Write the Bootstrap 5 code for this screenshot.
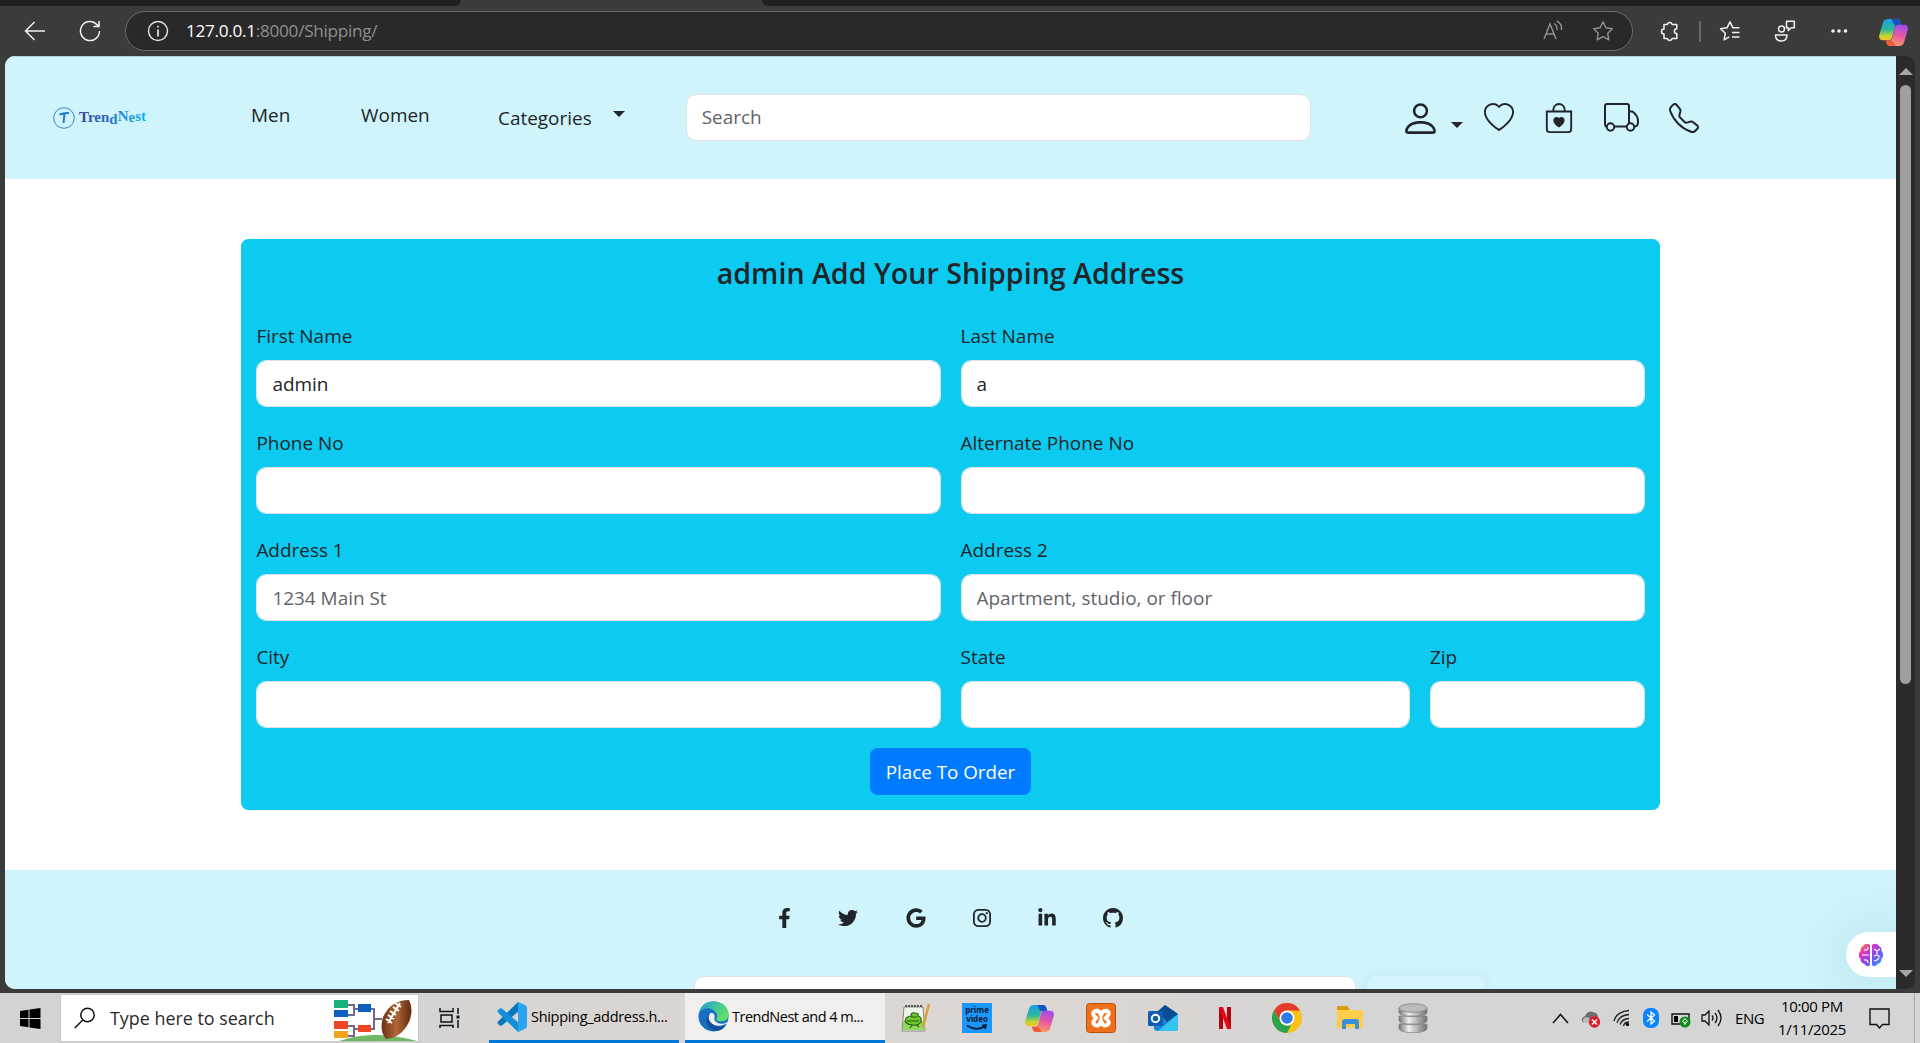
<!DOCTYPE html>
<html lang="en">
<head>
<meta charset="utf-8">
<meta name="viewport" content="width=device-width, initial-scale=1">
<title>TrendNest</title>
<link href="https://cdn.jsdelivr.net/npm/bootstrap@5.3.0/dist/css/bootstrap.min.css" rel="stylesheet">
<style>
html{font-size:20px}
body{font-family:"Open Sans","Noto Sans",sans-serif;font-size:18.95px;line-height:30px;height:1043px;overflow:hidden;background:#3b3b3b;color:#212529}
svg{display:block;flex:none}
.tabstrip{height:6px}
.tab-l{width:461px;background:#202020;border-bottom-right-radius:8px}
.tab-gap{width:301px}
.tab-r{background:#202020;border-bottom-left-radius:8px}
.toolbar{height:50px;color:#f2f2f2;padding-left:24px}
.urlbar{width:1508px;height:40px;border:1px solid #6b6b6b;border-radius:20px;background:#292929;margin-left:24px;padding-left:21px;font-size:17.2px;color:#8f8f8f}
.urlbar b{font-weight:400;color:#fff}
.urltext{margin-left:17px;letter-spacing:-.3px}
.viewport{height:933px;padding-left:5px;padding-right:5px}
.pagebox{width:1891px;border-radius:10px 0 0 10px;background:#fff;overflow:hidden}
.sky{background:#cff4fc}
.topnav{height:123px;border-top:1px solid #b5d2d8}
.form-control{border-radius:10px;font-size:18.95px;line-height:30px;height:47px}
.form-control::placeholder{color:#5f6469}
.searchbox{width:625px;margin-left:61px;margin-top:-2px}
.ship{margin-top:60px;padding:15px;background:#0dcaf0;border-radius:7.5px;height:571px}
.ship h4{font-size:28.6px;font-weight:600;line-height:36px;padding-top:1px;margin-bottom:29px}
.ship .form-label{padding-top:1px;margin-bottom:9px;display:block}
.order-btn{background:#007bff;border-color:#007bff;color:#fff;font-size:18.8px;line-height:30px;font-weight:500;height:47px;width:161px;padding:0;border-radius:7.5px;white-space:nowrap}
.foot{margin-top:60px;height:119px;position:relative}
.social{padding-top:38px;padding-left:773px;height:106px}
.mailrow{padding-left:689px;gap:11px}
.mail{width:662px;height:20px;background:#fff;border:1px solid #dee2e6;border-radius:10px 10px 0 0}
.sub{width:118px;height:20px;background:#d4f5fd;border-radius:9px 9px 0 0;box-shadow:0 0 12px rgba(0,80,110,.08)}
.caret{width:0;height:0;border:6px solid transparent;border-top-color:#212529;border-bottom:0}
.sbar{width:19px;background:#2b2b2b;border-radius:0 9px 9px 0;padding:12px 0}
.thumb{width:11px;height:599px;border-radius:6px;background:#9f9f9f;margin-top:10px}
.brain{position:absolute;right:0;top:62px;width:50px;height:45px;border-radius:23px 0 0 23px;background:#fff;box-shadow:0 2px 40px 18px rgba(0,70,90,.06)}
.taskbar{margin-top:4px;height:50px;color:#000;background:linear-gradient(90deg,#d3d3d3 0,#d5d4d3 400px,#dad5d2 600px,#dcd7d4 1000px,#d7d5d4 1250px,#d4d5d6 1400px,#d5d5d5 100%)}
.tsearch{width:359px;height:48px;background:#fff;margin-left:19px;padding-left:13px;border:1px solid #c8c8c8;font-size:17.9px;color:#2a2a2a}
.app{height:50px;border-bottom:3px solid #0078d7;font-size:14.5px;letter-spacing:-.3px;white-space:nowrap}
.app-code{width:190px;margin-left:28px;padding-left:7px}
.app-edge{width:200px;margin-left:6px;padding-left:13px;background:#f0efed;letter-spacing:-.5px}
.clock{font-size:15px;line-height:23px;width:80px;letter-spacing:-.35px;margin-left:7px}
.lang{font-size:15px;letter-spacing:-.4px;width:30px;margin-left:12px}
.brand{font-family:"Liberation Serif",serif;font-weight:700;font-size:14.2px}
.appname{font-size:8px;font-weight:700;fill:#06182c}
</style>
</head>
<body class="d-flex flex-column">
<svg width="0" height="0" class="position-absolute"><defs>
<linearGradient id="cpA" x1="0" y1="0" x2="0" y2="1"><stop offset="0" stop-color="#189fe8"/><stop offset=".5" stop-color="#2fb79a"/><stop offset=".8" stop-color="#c8d630"/><stop offset="1" stop-color="#f3c321"/></linearGradient>
<linearGradient id="cpB" x1=".6" y1="0" x2=".3" y2="1"><stop offset="0" stop-color="#a54bea"/><stop offset=".5" stop-color="#ea5aa0"/><stop offset="1" stop-color="#fca55e"/></linearGradient>
<symbol id="copilot" viewBox="0 0 28 28">
<path d="M9 1h8c3 0 3.500 2 4.300 5h-3c-1.600 0-2.400 1-3 3l-2.700 9.500c-.5 2-1.700 3-3.600 3H3.500C.5 21.500-.4 19 .4 16L3.600 5C4.500 2 6 1 9 1z" fill="url(#cpA)"/>
<path d="M12 1h5c3 0 3.500 2 4.500 6h-4c-2.500 0-3.500-1-4-3z" fill="#1b4fc4"/>
<path d="M19 27h-8c-3 0-3.500-2-4.300-5h3c1.600 0 2.400-1 3-3l2.700-9.500c.5-2 1.700-3 3.600-3h5.500c3 0 3.900 2.500 3.100 5.500l-3.200 11C23.500 26 22 27 19 27z" fill="url(#cpB)"/>
<path d="M16 27h-5c-3 0-3.500-2-4.300-5h4c2.500 0 3.800 1.500 5.300 5z" fill="#ee5b36"/></symbol>
<linearGradient id="brandG"><stop offset="0" stop-color="#3a3f9a"/><stop offset=".55" stop-color="#2b7fc9"/><stop offset="1" stop-color="#16b4ef"/></linearGradient>
<linearGradient id="brn" x1="0" y1="0" x2="1" y2="1"><stop offset="0" stop-color="#ff9a1f"/><stop offset=".3" stop-color="#e12fc0"/><stop offset=".6" stop-color="#7b4df2"/><stop offset="1" stop-color="#1fa6ff"/></linearGradient>
<linearGradient id="edg" x1="0" y1="0" x2="1" y2=".5"><stop offset="0" stop-color="#1a9fe0"/><stop offset="1" stop-color="#5fe06a"/></linearGradient>
<linearGradient id="ball"><stop offset="0" stop-color="#6b3317"/><stop offset=".5" stop-color="#b06536"/><stop offset="1" stop-color="#5e2b12"/></linearGradient>
<linearGradient id="cyl"><stop offset="0" stop-color="#777"/><stop offset=".35" stop-color="#eee"/><stop offset="1" stop-color="#6f6f6f"/></linearGradient>
</defs></svg>

<div class="tabstrip d-flex"><div class="tab-l"></div><div class="tab-gap"></div><div class="tab-r flex-grow-1"></div></div>

<div class="toolbar d-flex align-items-center">
  <svg width="22" height="22" fill="none" stroke="#f2f2f2" stroke-width="1.500"><path d="M21 11H2M10.500 2 1.500 11l9 9"/></svg>
  <svg width="22" height="22" style="margin-left:33px" fill="none" stroke="#f2f2f2" stroke-width="1.500"><path d="M20.500 11A9.500 9.500 0 1 1 17.800 4.400L20 6.500M20 1v5.500h-5.500"/></svg>
  <div class="urlbar d-flex align-items-center">
    <svg width="22" height="22" fill="none" stroke="#e6e6e6" stroke-width="1.400"><circle cx="11" cy="11" r="9.500"/><path d="M11 9.500v7M11 5.800v1.800" stroke-width="1.700"/></svg>
    <span class="urltext"><b>127.0.0.1</b>:8000/Shipping/</span>
    <svg class="ms-auto" width="22" height="22" fill="none" stroke="#929292" stroke-width="1.400"><path d="m2 19 6-15 6 15M4 14h8M12 3.500q3.500 2 3 6.500M15 .8q5.500 3.500 4.500 9.200"/></svg>
    <svg width="22" height="22" style="margin-right:18px;margin-left:28px" fill="none" stroke="#929292" stroke-width="1.400" stroke-linejoin="round"><path d="m11 1.800 2.900 6 6.500.9-4.700 4.600 1.100 6.500L11 16.700l-5.800 3.100 1.100-6.500L1.600 8.700l6.500-.9z"/></svg>
  </div>
  <div class="d-flex align-items-center flex-grow-1" style="padding-left:26px">
    <svg width="22" height="22" fill="none" stroke="#f2f2f2" stroke-width="1.500" stroke-linejoin="round"><path d="M5 4.500h3.200a2.600 2.600 0 0 1 5 0h4.600v4.300a2.300 2.300 0 0 0 0 4.800v4.900h-4.600a2.600 2.600 0 0 1-5 0H5v-4.400a2.500 2.500 0 0 1 0-5z"/></svg>
    <div style="width:2px;height:21px;background:#686868;margin-left:18px"></div>
    <svg width="22" height="22" style="margin-left:18px" fill="none" stroke="#f2f2f2" stroke-width="1.500" stroke-linejoin="round"><path d="M20.500 7.800h-6.500L11 1.800 8 7.800l-6.500.9 4.800 4.600-1.200 6.500 5.200-2.900M13 12.500h7.500M13 17h7.500"/></svg>
    <svg width="22" height="22" style="margin-left:33px" fill="none" stroke="#f2f2f2" stroke-width="1.500" stroke-linejoin="round"><circle cx="7.500" cy="9" r="3"/><path d="M1.500 15h11.500q0 6-5.700 6t-5.800-6zM12.500 1.200h7.800v6.500h-3l-3 2.700V7.700h-1.800z"/></svg>
    <svg width="18" height="6" style="margin-left:34px" fill="#f2f2f2"><circle cx="3" cy="3" r="1.800"/><circle cx="9" cy="3" r="1.800"/><circle cx="15.500" cy="3" r="1.800"/></svg>
    <svg width="29" height="29" style="margin-left:31px;margin-top:3px"><use href="#copilot"/></svg>
  </div>
</div>

<div class="viewport d-flex">
  <main class="pagebox">
    <nav class="topnav sky d-flex align-items-center">
      <svg width="100" height="28" style="margin-left:46px;margin-top:-1px"><circle cx="13" cy="14" r="10.300" fill="none" stroke="#3b86c9" stroke-width="1"/><path d="M8.500 10.500q5-2 9.500-1.500M13.500 10l-1 9" stroke="#2479c4" stroke-width="2" fill="none"/><text y="18" class="brand" fill="url(#brandG)" x="28" dy="0 0 0 0 1.500 -2.500 .5 -.3 -.7" textLength="67" lengthAdjust="spacingAndGlyphs">TrendNest</text></svg>
      <span style="width:110px;margin-left:100px;margin-top:-7px">Men</span>
      <span style="width:137px;margin-top:-7px">Women</span>
      <span>Categories</span>
      <span class="caret" style="margin-left:21px;margin-top:-9px"></span>
      <input class="form-control searchbox" placeholder="Search" aria-label="Search">
      <div class="d-flex align-items-center" style="margin-left:89px;color:#212529">
        <svg width="41" height="41" viewBox="0 0 16 16" fill="currentColor"><path d="M8 8a3 3 0 1 0 0-6 3 3 0 0 0 0 6m2-3a2 2 0 1 1-4 0 2 2 0 0 1 4 0m4 8c0 1-1 1-1 1H3s-1 0-1-1 1-4 6-4 6 3 6 4m-1-.004c-.001-.246-.154-.986-.832-1.664C11.516 10.680 10.289 10 8 10s-3.516.680-4.168 1.332c-.678.678-.830 1.418-.832 1.664z"/></svg>
        <span class="caret" style="margin:14px 0 0 10px"></span>
        <svg style="margin-left:21px" width="30" height="30" viewBox="0 0 16 16" fill="currentColor"><path d="m8 2.748-.717-.737C5.600.281 2.514.878 1.400 3.053c-.523 1.023-.641 2.500.314 4.385.920 1.815 2.834 3.989 6.286 6.357 3.452-2.368 5.365-4.542 6.286-6.357.955-1.886.838-3.362.314-4.385C13.486.878 10.400.280 8.717 2.010zM8 15C-7.333 4.868 3.279-3.040 7.824 1.143q.090.083.176.171a3 3 0 0 1 .176-.170C12.720-3.042 23.333 4.867 8 15"/></svg>
        <svg style="margin-left:30px" width="30" height="30" viewBox="0 0 16 16" fill="currentColor"><path d="M10.500 3.500a2.500 2.500 0 0 0-5 0V4h5zm1 0V4H15v10a2 2 0 0 1-2 2H3a2 2 0 0 1-2-2V4h3.500v-.5a3.500 3.500 0 1 1 7 0M14 14V5H2v9a1 1 0 0 0 1 1h10a1 1 0 0 0 1-1M8 7.993c1.664-1.711 5.825 1.283 0 5.132-5.825-3.850-1.664-6.843 0-5.132"/></svg>
        <svg style="margin-left:30px;margin-top:-2px" width="36" height="30" fill="none" stroke="currentColor" stroke-width="2"><path d="M3 24.500H2q-1-.5-1-3V4q0-2 2-2h20q2 0 2 2v20.500H10M25 9.500h3.500q6 4.500 5.500 10.500 0 4-3 4.500"/><circle cx="6.500" cy="25" r="3.700"/><circle cx="26.500" cy="25" r="3.700" fill="#cff4fc"/></svg>
        <svg style="margin-left:29px" width="30" height="30" viewBox="0 0 16 16" fill="currentColor"><path d="M3.654 1.328a.678.678 0 0 0-1.015-.063L1.605 2.300c-.483.484-.661 1.169-.450 1.770a17.600 17.600 0 0 0 4.168 6.608 17.600 17.600 0 0 0 6.608 4.168c.601.211 1.286.033 1.770-.450l1.034-1.034a.678.678 0 0 0-.063-1.015l-2.307-1.794a.680.680 0 0 0-.580-.122l-2.190.547a1.750 1.750 0 0 1-1.657-.459L5.482 8.062a1.750 1.750 0 0 1-.460-1.657l.548-2.190a.680.680 0 0 0-.122-.580zM1.884.511a1.745 1.745 0 0 1 2.612.163L6.290 2.980c.329.423.445.974.315 1.494l-.547 2.190a.680.680 0 0 0 .178.643l2.457 2.457a.680.680 0 0 0 .644.178l2.189-.547a1.750 1.750 0 0 1 1.494.315l2.306 1.794c.829.645.905 1.870.163 2.611l-1.034 1.034c-.740.740-1.846 1.065-2.877.702a18.600 18.600 0 0 1-7.010-4.420 18.600 18.600 0 0 1-4.420-7.009c-.362-1.030-.037-2.137.703-2.877z"/></svg>
      </div>
    </nav>

    <section class="ship w-75 mx-auto">
      <h4 class="text-center">admin Add Your Shipping Address</h4>
      <form class="row g-3">
        <div class="col-6"><label class="form-label" for="fn">First Name</label><input class="form-control" id="fn" value="admin"></div>
        <div class="col-6"><label class="form-label" for="ln">Last Name</label><input class="form-control" id="ln" value="a"></div>
        <div class="col-6"><label class="form-label" for="ph">Phone No</label><input class="form-control" id="ph"></div>
        <div class="col-6"><label class="form-label" for="ap">Alternate Phone No</label><input class="form-control" id="ap"></div>
        <div class="col-6"><label class="form-label" for="a1">Address 1</label><input class="form-control" id="a1" placeholder="1234 Main St"></div>
        <div class="col-6"><label class="form-label" for="a2">Address 2</label><input class="form-control" id="a2" placeholder="Apartment, studio, or floor"></div>
        <div class="col-6"><label class="form-label" for="ct">City</label><input class="form-control" id="ct"></div>
        <div class="col-4"><label class="form-label" for="st">State</label><input class="form-control" id="st"></div>
        <div class="col-2"><label class="form-label" for="zp">Zip</label><input class="form-control" id="zp"></div>
        <div class="col-12 text-center"><button type="button" class="btn order-btn">Place To Order</button></div>
      </form>
    </section>

    <footer class="foot sky">
      <div class="social d-flex">
        <svg width="13" height="20" viewBox="0 0 320 512" fill="#212529"><path d="M279.140 288l14.220-92.660h-88.910v-60.130c0-25.350 12.420-50.060 52.240-50.060h40.420V6.260S260.430 0 225.360 0c-73.220 0-121.080 44.380-121.080 124.720v70.620H22.890V288h81.390v224h100.170V288z"/></svg>
        <svg style="margin-left:47px" width="20" height="20" viewBox="0 0 512 512" fill="#212529"><path d="M459.370 151.716c.325 4.548.325 9.097.325 13.645 0 138.720-105.583 298.558-298.558 298.558-59.452 0-114.680-17.219-161.137-47.106 8.447.974 16.568 1.299 25.340 1.299 49.055 0 94.213-16.568 130.274-44.832-46.132-.975-84.792-31.188-98.112-72.772 6.498.974 12.995 1.624 19.818 1.624 9.421 0 18.843-1.300 27.614-3.573-48.081-9.747-84.143-51.980-84.143-102.985v-1.299c13.969 7.797 30.214 12.670 47.431 13.319-28.264-18.843-46.781-51.005-46.781-87.391 0-19.492 5.197-37.360 14.294-52.954 51.655 63.675 129.300 105.258 216.365 109.807-1.624-7.797-2.599-15.918-2.599-24.040 0-57.828 46.782-104.934 104.934-104.934 30.213 0 57.502 12.670 76.670 33.137 23.715-4.548 46.456-13.320 66.599-25.340-7.798 24.366-24.366 44.833-46.132 57.827 21.117-2.273 41.584-8.122 60.426-16.243-14.292 20.791-32.161 39.308-52.628 54.253z"/></svg>
        <svg style="margin-left:48px" width="20" height="20" viewBox="0 0 488 512" fill="#212529"><path d="M488 261.800C488 403.300 391.100 504 248 504 110.800 504 0 393.200 0 256S110.800 8 248 8c66.800 0 123 24.500 166.300 64.900l-67.500 64.900C258.500 52.600 94.300 116.600 94.300 256c0 86.500 69.100 156.600 153.700 156.600 98.200 0 135-70.400 140.800-106.900H248v-85.300h236.100c2.300 12.700 3.900 24.900 3.900 41.400z"/></svg>
        <svg style="margin-left:46px" width="20" height="20" fill="none" stroke="#212529" stroke-width="1.800"><rect x="1.900" y="1.900" width="16.200" height="16.200" rx="4.500"/><circle cx="10" cy="10" r="3.800"/><circle cx="14.800" cy="5.200" r="1.100" fill="#212529" stroke="none"/></svg>
        <svg style="margin-left:46px" width="18" height="20" viewBox="0 0 448 512" fill="#212529"><path d="M100.280 448H7.400V148.900h92.880zM53.790 108.100C24.090 108.100 0 83.500 0 53.800a53.790 53.790 0 0 1 107.580 0c0 29.700-24.100 54.300-53.790 54.300zM447.900 448h-92.680V302.400c0-34.700-.7-79.200-48.290-79.200-48.290 0-55.690 37.700-55.690 76.700V448h-92.780V148.900h89.080v40.800h1.300c12.400-23.500 42.690-48.300 87.880-48.300 94 0 111.280 61.900 111.280 142.300V448z"/></svg>
        <svg style="margin-left:47px" width="20" height="20" viewBox="0 0 16 16" fill="#212529"><path d="M8 0C3.580 0 0 3.580 0 8c0 3.540 2.290 6.530 5.470 7.590.400.070.550-.170.550-.380 0-.190-.010-.820-.010-1.490-2.010.370-2.530-.490-2.690-.940-.090-.230-.480-.940-.820-1.130-.280-.150-.680-.520-.010-.530.630-.010 1.080.580 1.230.820.720 1.210 1.870.870 2.330.660.070-.520.280-.870.510-1.070-1.780-.200-3.640-.890-3.640-3.950 0-.870.310-1.590.820-2.150-.080-.200-.360-1.020.080-2.120 0 0 .670-.210 2.200.820.640-.180 1.320-.270 2-.270s1.360.090 2 .270c1.530-1.040 2.200-.820 2.200-.820.440 1.100.160 1.920.080 2.120.510.560.820 1.270.820 2.150 0 3.070-1.870 3.750-3.650 3.950.290.250.540.730.540 1.480 0 1.070-.010 1.930-.010 2.200 0 .210.150.460.550.380A8.010 8.010 0 0 0 16 8c0-4.420-3.580-8-8-8"/></svg>
      </div>
      <div class="mailrow d-flex"><div class="mail"></div><div class="sub"></div></div>
      <div class="brain d-flex align-items-center">
        <svg width="26" height="24" style="margin-left:12px"><path d="M12 2Q8-1 5 3 2 4 2.500 8-1 12 2.500 16q0 4 4 5 3 4 5.500 1zM14 2q4-3 7 1 3 1 2.500 5 3.500 4 0 8 0 4-4 5-3 4-5.500 1z" fill="url(#brn)"/><path d="M4 12h7M6 7q4 1 4-3M6 17q4-1 4 3M16 6l3 2 3-2M19 8v3M16 13l3-1 3 2M16 18l3-1 2-2" stroke="#fff" stroke-width="1.200" fill="none"/></svg>
      </div>
    </footer>
  </main>
  <div class="sbar d-flex flex-column align-items-center">
    <svg width="14" height="7" fill="#a5a5a5"><path d="M0 7 7 0l7 7z"/></svg>
    <div class="thumb"></div>
    <svg class="mt-auto" width="14" height="7" fill="#a5a5a5"><path d="M0 0h14L7 7z"/></svg>
  </div>
</div>

<div class="taskbar d-flex align-items-center">
  <svg width="21" height="21" style="margin-left:20px" fill="#000"><path d="M0 3 8.500 1.800v8.300H0zM9.500 1.600 20.500 0v10.100h-11zM0 11h8.500v8.200L0 18zM9.500 11h11v10l-11-1.600z"/></svg>
  <div class="tsearch d-flex align-items-center">
    <svg width="22" height="22" fill="none" stroke="#111" stroke-width="1.500"><circle cx="13.500" cy="8" r="6.700"/><path d="m8.800 13-8 8"/></svg>
    <span style="margin-left:14px;white-space:nowrap">Type here to search</span>
    <svg width="84" height="46" class="ms-auto">
      <path d="M14 10h6v10h-6M20 14h8M14 31h6v10h-6M20 34h8M36 14h4v20h-4M40 24h8" fill="none" stroke="#73688a" stroke-width="2"/>
      <path d="M0 5h14v8H0z" fill="#19b27b"/><path d="M0 15h14v7H0zM24 9h13v8H24z" fill="#0f5fc2"/><path d="M0 26h14v8H0zM24 30h13v7H24z" fill="#ef4724"/><path d="M0 36h14v7H0z" fill="#f1a51c"/>
      <path d="M5 46q20-7 40-6t38 6z" fill="#6fb765"/><path d="M75 5q-18 0-26 17-4 14 3 22 15-1 23-17 5-12 0-22z" fill="url(#ball)"/><path d="m66 8-12 20M61 8l6 4M59 12l6 4M56 16l6 4M54 20l6 4M52 24l6 4" stroke="#fff" stroke-width="2" fill="none"/>
    </svg>
  </div>
  <svg width="22" height="22" style="margin-left:20px" fill="none" stroke="#111" stroke-width="1.500"><path d="M1 1v3.500h13V1M2 8h11v7H2zM1 21v-2.500h13V21M19 1v6M19 13v8"/><path d="M17.500 8.500h3v3h-3z" fill="#111" stroke="none"/></svg>
  <div class="app app-code d-flex align-items-center">
    <svg width="32" height="32" viewBox="0 0 32 32"><path d="M22 1 2 20.500q-1 1.500 0 2.500l2 1.500q1 .5 2 0L24 9z" fill="#0878bd"/><path d="M22 31 2 11.500Q1 10 2 9l2-1.500q1-.5 2 0L24 23z" fill="#1490d8"/><path d="M22 1l7 3q2 1 2 3v18q0 2-2 3l-7 3V1z" fill="#29a5f2"/></svg>
    <span style="margin-left:3px">Shipping_address.h...</span>
  </div>
  <div class="app app-edge d-flex align-items-center">
    <svg width="31" height="31" viewBox="0 0 32 32"><circle cx="16" cy="16" r="15.500" fill="#176fc2"/><path d="M.7 14Q3 .5 16 .5 30 1 31.500 13q.5 8-7.500 8-6 0-5-3 2-2-.5-6Q14 6 7 8 2 9 .7 14z" fill="url(#edg)"/><path d="M12 14q-5 4-2.500 10 3 7 10 7 6-1 9.500-6-6 3-12 0-6-4-5-11z" fill="#12509c"/><path d="M13 12q-4 5 0 10 5 6 15 2 2-1 1.500 0 1-1 .5-2-4 2.500-9 1-5-2-4-5.500 1-2-1-4.500z" fill="#f0efed"/></svg>
    <span style="margin-left:3px">TrendNest and 4 m...</span>
  </div>
  <svg width="30" height="30" style="margin-left:16px"><path d="M3 4h19l2 24H1z" fill="#eef4e6" stroke="#888" stroke-width="1"/><path d="M2 18h21l1 9H2z" fill="#8fd95c"/><path d="M4 3h17" stroke="#555" stroke-width="2" stroke-dasharray="2 1"/><path d="M4 18q1-5 6-5 0-4 4-3 4 0 3 3 4 1 3 6-3 4-8 3-6 0-8-4zM10 14h6M6 18h12M11 22l-2 3M16 22l2 2" fill="#6fc92d" stroke="#2c5519" stroke-width="1.100"/><path d="M28 1 22 24" stroke="#dba03a" stroke-width="2.500"/></svg>
  <svg width="30" height="30" style="margin-left:31px"><path d="M0 0h30v30H0z" fill="#1a98ff"/><text x="15" y="9.500" text-anchor="middle" class="appname">prime</text><text x="15" y="19" text-anchor="middle" class="appname">video</text><path d="M5 22.500q9 6 18 1M20 22.500l4-.5-1 4" stroke="#06182c" stroke-width="1.700" fill="none"/></svg>
  <svg width="29" height="29" style="margin-left:33px"><use href="#copilot"/></svg>
  <svg width="30" height="30" style="margin-left:32px"><rect x=".5" y=".5" width="29" height="29" rx="3" fill="#ef701c" stroke="#b95008"/><path d="M9 8q4-1 6 4 2-5 6-4 4 2-1 7 5 5 1 7-4 2-6-4-2 6-6 4-4-2 1-7-5-5-1-7z" fill="none" stroke="#fff" stroke-width="4"/></svg>
  <svg width="31" height="30" style="margin-left:32px"><path d="m6 12 11-10 13 9v14q0 3-3 3H10q-4 0-4-3z" fill="#1686d9"/><path d="m10 8 7-6 13 9-11 8z" fill="#0b4d93"/><path d="M30 11 10 28h17q3 0 3-3z" fill="#35c4ef"/><rect y="8" width="15" height="15" rx="1.500" fill="#0f5eb4"/><circle cx="7.500" cy="15.500" r="3.700" fill="none" stroke="#fff" stroke-width="2"/></svg>
  <svg width="14" height="24" style="margin-left:39px"><path d="M1 1h4v22H1zM9 1h4v22H9z" fill="#b20710"/><path d="M1 1h4l8 22H9z" fill="#e50914"/></svg>
  <svg width="30" height="30" viewBox="0 0 30 30" style="margin-left:40px"><circle cx="15" cy="15" r="15" fill="#fbc116"/><path d="M2 7.500A15 15 0 0 1 28 7.500H15L8.500 18.500z" fill="#e33b2e"/><path d="M2 7.500 8.500 18.700Q11 22.500 15 22.500h4L15 30A15 15 0 0 1 2 7.500z" fill="#2ba24c"/><circle cx="15" cy="15" r="7.500" fill="#fff"/><circle cx="15" cy="15" r="5.800" fill="#2e7cea"/></svg>
  <svg width="28" height="26" style="margin-left:34px"><path d="M1 2q0-1 1-1h9l3 4h-13z" fill="#dc9b0a"/><path d="M1 5h25q1 0 1 1v16q0 1-1 1H1z" fill="#ffcd4b"/><path d="M6 24v-7q0-3 3-3h11q3 0 3 3v7h-4v-5h-9v5z" fill="#3a8fd6"/></svg>
  <svg width="30" height="30" style="margin-left:34px" fill="url(#cyl)" stroke="#858585" stroke-width=".8"><path d="M1 21v5c3 5 25 5 28 0v-5zM1 13v5c3 5 25 5 28 0v-5zM1 5v5c3 5 25 5 28 0V5z"/><ellipse cx="15" cy="5" rx="14" ry="4.300" fill="#bbb"/></svg>

  <svg width="17" height="11" style="margin-left:124px" fill="none" stroke="#111" stroke-width="1.500"><path d="m1 10 7.500-8.500L16 10"/></svg>
  <svg width="21" height="20" style="margin-left:11px;margin-top:2px"><path d="M4 14q-5-4 1-7Q8 1 13 3q5 1 5 5 2 3 0 6z" fill="#6e6e6e"/><path d="M4 14q-3-5 3-6l5 3 7-2q1 4-3 5z" fill="#bbb"/><circle cx="14.500" cy="13" r="5.700" fill="#e01b2c"/><path d="m12 10.500 5 5m0-5-5 5" stroke="#fff" stroke-width="1.500"/></svg>
  <svg width="18" height="18" style="margin-left:12px" fill="none" stroke="#222" stroke-width="1.300"><path d="M1 12Q3 3 16 1.500M4 14Q6 6.500 16 5.500M7 15.500Q9 10 16 9.500M10.500 17q1-4 5.500-4"/><circle cx="14.500" cy="15.500" r="1.700" fill="#111" stroke="none"/></svg>
  <svg width="16" height="20" style="margin-left:12px"><rect width="16" height="20" rx="7" fill="#0a84ff"/><path d="m4 6.500 7.500 6.500L8 16V4l3.500 3L4 13.500" fill="none" stroke="#fff" stroke-width="1.300"/></svg>
  <svg width="21" height="18" style="margin-left:12px;margin-top:1px"><path d="M1 4h17v10H1z" fill="none" stroke="#111" stroke-width="1.400"/><path d="M3 6h4v6H3z"/><circle cx="14" cy="12" r="5.500" fill="#108a1e"/><path d="M14 15v-3M14 8.500l2.500 3-2.500 2-2.500-2z" stroke="#fff" fill="none"/></svg>
  <svg width="22" height="20" style="margin-left:9px" fill="none" stroke="#111" stroke-width="1.300"><path d="M1 7h3l4-4v14l-4-4H1zM11 7.500q2 2.500 0 5M14 5q4 5 0 10M17 2q6 8 0 16"/></svg>
  <span class="lang">ENG</span>
  <div class="clock text-center">10:00 PM<br>1/11/2025</div>
  <svg width="21" height="21" style="margin-left:17px" fill="none" stroke="#111" stroke-width="1.400"><path d="M1 1h19v15.500h-6.500L10.500 20l-3-3.500H1z"/></svg>
  <div style="width:1px;height:50px;background:#a8a8a8;margin-left:24px"></div>
</div>
<script src="https://cdn.jsdelivr.net/npm/bootstrap@5.3.0/dist/js/bootstrap.bundle.min.js"></script>
</body>
</html>
